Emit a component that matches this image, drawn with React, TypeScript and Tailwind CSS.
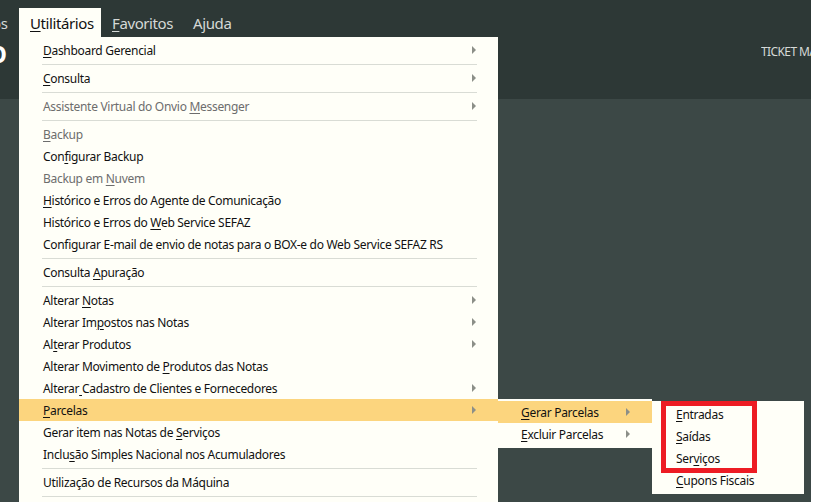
type Item = { label: string; arrow?: boolean; disabled?: boolean; active?: boolean } | "sep";

const mainItems: Item[] = [
  { label: "&Dashboard Gerencial", arrow: true },
  "sep",
  { label: "&Consulta", arrow: true },
  "sep",
  { label: "Assistente Virtual do Onvio &Messenger", arrow: true, disabled: true },
  "sep",
  { label: "&Backup", disabled: true },
  { label: "Con&figurar Backup" },
  { label: "Backup em &Nuvem", disabled: true },
  { label: "&Histórico e Erros do Agente de Comunicação" },
  { label: "Histórico e Erros do &Web Service SEFAZ" },
  { label: "Configurar E-mail de envio de notas para o BOX-e do Web Service SEFAZ RS" },
  "sep",
  { label: "Consulta &Apuração" },
  "sep",
  { label: "Alterar &Notas", arrow: true },
  { label: "Alterar Im&postos nas Notas", arrow: true },
  { label: "Al&terar Produtos", arrow: true },
  { label: "Alterar Movimento de &Produtos das Notas" },
  { label: "Alterar& Cadastro de Clientes e Fornecedores", arrow: true },
  { label: "&Parcelas", arrow: true, active: true },
  { label: "Gerar item nas Notas de &Serviços" },
  { label: "Inclu&são Simples Nacional nos Acumuladores" },
  "sep",
  { label: "Utilização de Recursos da Máquina" },
  "sep",
];

// "&" marks the letter that gets the access-key underline
function Label({ text }: { text: string }) {
  const i = text.indexOf("&");
  if (i < 0) return <span>{text}</span>;
  return (
    <span>
      {text.slice(0, i)}
      <span className="underline underline-offset-2">{text[i + 1]}</span>
      {text.slice(i + 2)}
    </span>
  );
}

function Arrow() {
  return (
    <svg width="4" height="8" viewBox="0 0 4 8" className="shrink-0">
      <path d="M0 0 L4 4 L0 8 Z" fill="#8c8f88" />
    </svg>
  );
}

function MenuRow({ item }: { item: Exclude<Item, "sep"> }) {
  return (
    <div
      className={`flex h-[22px] items-center justify-between pl-[24px] pr-[22px] ${
        item.active ? "bg-[#fcd57e]" : ""
      } ${item.disabled ? "text-[#6d6d6d]" : "text-[#111111]"}`}
    >
      <div className="pt-[2px]">
        <Label text={item.label} />
      </div>
      {item.arrow && <Arrow />}
    </div>
  );
}

function SubRow({ text, arrow }: { text: string; arrow?: boolean }) {
  return (
    <div className="flex h-[22px] items-center justify-between pr-[22px] text-[#111111]">
      <div className="pt-[2px]">
        <Label text={text} />
      </div>
      {arrow && <Arrow />}
    </div>
  );
}

export default function App() {
  return (
    <div className="relative h-[502px] w-full overflow-hidden bg-white font-['Noto_Sans',sans-serif] text-[12px] tracking-[-0.3px]">
      <div className="flex h-full w-[811px] flex-col overflow-hidden">
        <div className="h-[99px] bg-[#2d3836]">
          <div className="flex pt-[8px] text-[15px] tracking-[-0.4px] text-[#d5d9d7]">
            <div className="-ml-[8px] w-[27px] pt-[1px] leading-[29px]">os</div>
            <div className="flex h-[29px] w-[82px] items-center bg-[#fffff8] pl-[11px] pt-[1px] text-[#111111]">
              <Label text="&Utilitários" />
            </div>
            <div className="ml-[11px] pt-[1px] leading-[29px]">
              <Label text="&Favoritos" />
            </div>
            <div className="ml-[20px] pt-[1px] leading-[29px]">Ajuda</div>
          </div>
          <div className="flex items-start justify-between">
            <div className="-ml-[12px] pt-[3px] text-[24px] leading-[26px] font-bold text-white">O</div>
            <div className="w-[50px] overflow-hidden pt-[5px] text-[12px] tracking-[-0.6px] whitespace-nowrap text-[#d5d9d7]">
              TICKET MANAGER
            </div>
          </div>
        </div>
        <div className="flex-1 bg-[#3c4846]" />
      </div>

      {/* main dropdown */}
      <div className="absolute top-[37px] left-[19px] h-[465px] w-[479px] bg-[#fffff8] pt-[2px]">
        {mainItems.map((item, i) =>
          item === "sep" ? (
            <div key={i} className="flex h-[6px] items-center pl-[23px] pr-[21px]">
              <div className="h-px w-full bg-[#d9dcd5]" />
            </div>
          ) : (
            <MenuRow key={i} item={item} />
          ),
        )}
      </div>

      {/* Parcelas submenu */}
      <div className="absolute top-[399px] left-[498px] w-[154px] bg-[#fffff8] pt-[2px] pb-[3px]">
        <div className="bg-[#fcd57e] pl-[23px]">
          <SubRow text="&Gerar Parcelas" arrow />
        </div>
        <div className="pl-[23px]">
          <SubRow text="&Excluir Parcelas" arrow />
        </div>
      </div>

      {/* Gerar Parcelas submenu */}
      <div className="absolute top-[401px] left-[652px] w-[152px] bg-[#fffff8] pt-[2px] pb-[3px] pl-[24px]">
        <SubRow text="&Entradas" />
        <SubRow text="&Saídas" />
        <SubRow text="Ser&viços" />
        <SubRow text="&Cupons Fiscais" />
      </div>

      {/* red annotation box */}
      <div className="absolute top-[401px] left-[661px] h-[72px] w-[96px] border-[5px] border-[#ed1c24]" />
    </div>
  );
}
